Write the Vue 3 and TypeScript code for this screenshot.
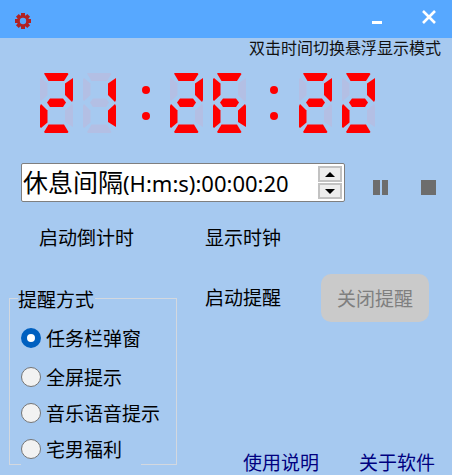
<script setup lang="ts">
import { ref } from 'vue'

// seven segment shapes, local coords of one 33x60 digit
const SEGMENTS: Record<string, string> = {
  a: '4,0.5 5,0 27.5,0 28.5,1 24,8 8.5,8',
  b: '33,5 33,27 32,29 25,22 25,10.5',
  c: '25,37.5 32,31 33,33 33,54 25,49',
  d: '8.5,51.5 24,51.5 28.5,59 27.5,60 5,60 4,59',
  e: '7.5,37.5 7.5,49.5 1,55 0,54 0,33 1,31',
  f: '1,5 7.5,10.5 7.5,22 1,28 0,27 0,6',
  g: '7,29.5 10,25.5 23,25.5 26,29.5 23,34 10,34'
}

const DIGIT_MAP: Record<string, string> = {
  '0': 'abcdef',
  '1': 'bc',
  '2': 'abdeg',
  '3': 'abcdg',
  '4': 'bcfg',
  '5': 'acdfg',
  '6': 'acdefg',
  '7': 'abc',
  '8': 'abcdefg',
  '9': 'abcdfg'
}

const segNames = Object.keys(SEGMENTS)

const digits = [
  { ch: '2', x: 0 },
  { ch: '1', x: 43 },
  { ch: '2', x: 130 },
  { ch: '6', x: 173 },
  { ch: '2', x: 259 },
  { ch: '2', x: 302 }
]
const colons = [106, 234]

const modes = ['任务栏弹窗', '全屏提示', '音乐语音提示', '宅男福利']
const mode = ref(modes[0])
</script>

<template>
  <div class="window">
    <header class="titlebar">
      <svg class="gear" width="18" height="18" viewBox="0 0 18 18">
        <g fill="#b22222">
          <rect v-for="a in [0, 45, 90, 135]" :key="a" x="7" y="1" width="4" height="16" :transform="`rotate(${a} 9 9)`" />
        </g>
        <circle cx="9" cy="9" r="4.6" fill="none" stroke="#b22222" stroke-width="3" />
        <circle cx="9" cy="9" r="3.2" fill="#57a8ff" />
      </svg>
      <div class="min-btn"></div>
      <svg class="close-btn" width="14" height="14" viewBox="0 0 14 14">
        <path d="M1 1 L13 13 M13 1 L1 13" stroke="#fff" stroke-width="2.6" fill="none" />
      </svg>
    </header>

    <div class="hint">双击时间切换悬浮显示模式</div>

    <svg class="clock" width="337" height="60" viewBox="0 0 337 60">
      <g v-for="(d, i) in digits" :key="i" :transform="`translate(${d.x} 0)`">
        <polygon
          v-for="s in segNames"
          :key="s"
          :points="SEGMENTS[s]"
          :fill="DIGIT_MAP[d.ch].includes(s) ? '#ff0000' : '#b3bfe4'"
        />
      </g>
      <g v-for="c in colons" :key="c" fill="#ff0000">
        <circle :cx="c" cy="17" r="4" />
        <circle :cx="c" cy="43" r="4" />
      </g>
    </svg>

    <div class="timer-row">
      <div class="spin-box">
        <div class="spin-text"><span class="spin-label">休息间隔</span><span class="spin-value">(H:m:s):00:00:20</span></div>
        <div class="spin-btns">
          <button class="spin-btn"><span class="tri up"></span></button>
          <button class="spin-btn"><span class="tri down"></span></button>
        </div>
      </div>
      <div class="pause"><span></span><span></span></div>
      <div class="stop"></div>
    </div>

    <div class="actions">
      <span class="action wide">启动倒计时</span>
      <span class="action">显示时钟</span>
    </div>

    <div class="lower">
      <fieldset class="group">
        <div class="legend">提醒方式</div>
        <label v-for="m in modes" :key="m" class="radio-row">
          <input type="radio" name="mode" :value="m" v-model="mode" />
          <span>{{ m }}</span>
        </label>
        <div class="group-gap"></div>
      </fieldset>

      <div class="right-col">
        <div class="remind-row">
          <span class="action">启动提醒</span>
          <button class="off-btn" disabled>关闭提醒</button>
        </div>
        <div class="links">
          <a>使用说明</a>
          <a>关于软件</a>
        </div>
      </div>
    </div>
  </div>
</template>

<style>
html, body { margin: 0; padding: 0; }
</style>

<style scoped>
.window {
  width: 452px;
  height: 475px;
  overflow: hidden;
  background: #a6c9f0;
  color: #000;
  font-family: "Noto Sans", "Noto Sans CJK SC", sans-serif;
  display: flex;
  flex-direction: column;
}
.titlebar {
  height: 38px;
  flex: none;
  background: #57a8ff;
  display: flex;
  align-items: flex-start;
}
.gear { margin: 12px 0 0 14px; }
.min-btn {
  width: 10px;
  height: 3px;
  background: #fff;
  margin: 21px 0 0 340px;
}
.close-btn { margin: 9.5px 0 0 40px; }
.hint {
  height: 20px;
  line-height: 20px;
  font-size: 16px;
  text-align: right;
  padding-right: 11px;
  color: #111;
  white-space: nowrap;
}
.clock {
  display: block;
  flex: none;
  margin: 15px 0 0 40px;
}
.timer-row {
  margin-top: 30px;
  padding-left: 21px;
  display: flex;
  align-items: flex-start;
}
.spin-box {
  width: 324px;
  height: 39px;
  box-sizing: border-box;
  background: #fff;
  border: 1px solid #7f7f7f;
  border-radius: 2px;
  display: flex;
  align-items: center;
}
.spin-text {
  flex: 1;
  min-width: 0;
  padding: 3px 0 0 1px;
  white-space: nowrap;
  line-height: 34px;
}
.spin-label { font-size: 25px; }
.spin-value { font-size: 22px; }
.spin-btns {
  width: 24px;
  margin-right: 2px;
  display: flex;
  flex-direction: column;
  gap: 1px;
}
.spin-btn {
  width: 24px;
  height: 16px;
  box-sizing: border-box;
  padding: 0;
  border: 2px solid #c2c2c2;
  background: #ededed;
  display: flex;
  align-items: center;
  justify-content: center;
}
.tri {
  width: 0;
  height: 0;
  border-left: 5px solid transparent;
  border-right: 5px solid transparent;
}
.tri.up { border-bottom: 5px solid #000; }
.tri.down { border-top: 5px solid #000; }
.pause {
  margin: 17px 0 0 28px;
  width: 15px;
  height: 15px;
  display: flex;
  justify-content: space-between;
}
.pause span {
  width: 6.5px;
  background: #6d6d6d;
}
.stop {
  margin: 17px 0 0 33px;
  width: 15px;
  height: 15px;
  background: #6d6d6d;
}
.actions {
  margin-top: 23px;
  padding-left: 39px;
  display: flex;
}
.action {
  font-size: 19px;
  line-height: 26px;
  white-space: nowrap;
}
.action.wide { width: 166px; }
.lower {
  flex: 1;
  min-height: 0;
  margin-top: 23px;
  display: flex;
}
.group {
  position: relative;
  flex: none;
  box-sizing: border-box;
  width: 168px;
  height: 167px;
  margin: 24px 0 0 9px;
  padding: 21px 0 0 11px;
  border: 1px solid #d3d8df;
  min-inline-size: 0;
}
.legend {
  position: absolute;
  top: -11px;
  left: 8px;
  padding-right: 1px;
  background: #a6c9f0;
  font-size: 19px;
  line-height: 24px;
  white-space: nowrap;
}
.group-gap {
  position: absolute;
  left: 11px;
  bottom: -1px;
  width: 120px;
  height: 1px;
  background: #a6c9f0;
}
.radio-row {
  display: flex;
  align-items: center;
  height: 36px;
  font-size: 19px;
  white-space: nowrap;
}
.radio-row:first-of-type { margin-bottom: 3px; }
.radio-row input {
  appearance: none;
  -webkit-appearance: none;
  width: 20px;
  height: 20px;
  box-sizing: border-box;
  margin: 0 5px 0 0;
  border-radius: 50%;
  border: 1.5px solid #757575;
  background: #f2f2f2;
}
.radio-row input:checked {
  border: 6px solid #0060c0;
  background: #fff;
}
.right-col {
  flex: 1;
  min-width: 0;
  margin-left: 28px;
  display: flex;
  flex-direction: column;
}
.remind-row {
  display: flex;
  align-items: center;
  height: 48px;
}
.off-btn {
  width: 108px;
  height: 48px;
  margin-left: 40px;
  border: 0;
  border-radius: 10px;
  background: #cacaca;
  color: #7f7f7f;
  font-family: inherit;
  font-size: 19px;
  padding: 0;
}
.links {
  margin-top: auto;
  padding: 0 0 0 38px;
  height: 24px;
  display: flex;
  gap: 40px;
  font-size: 19px;
  line-height: 24px;
  color: #000080;
  white-space: nowrap;
}
</style>
